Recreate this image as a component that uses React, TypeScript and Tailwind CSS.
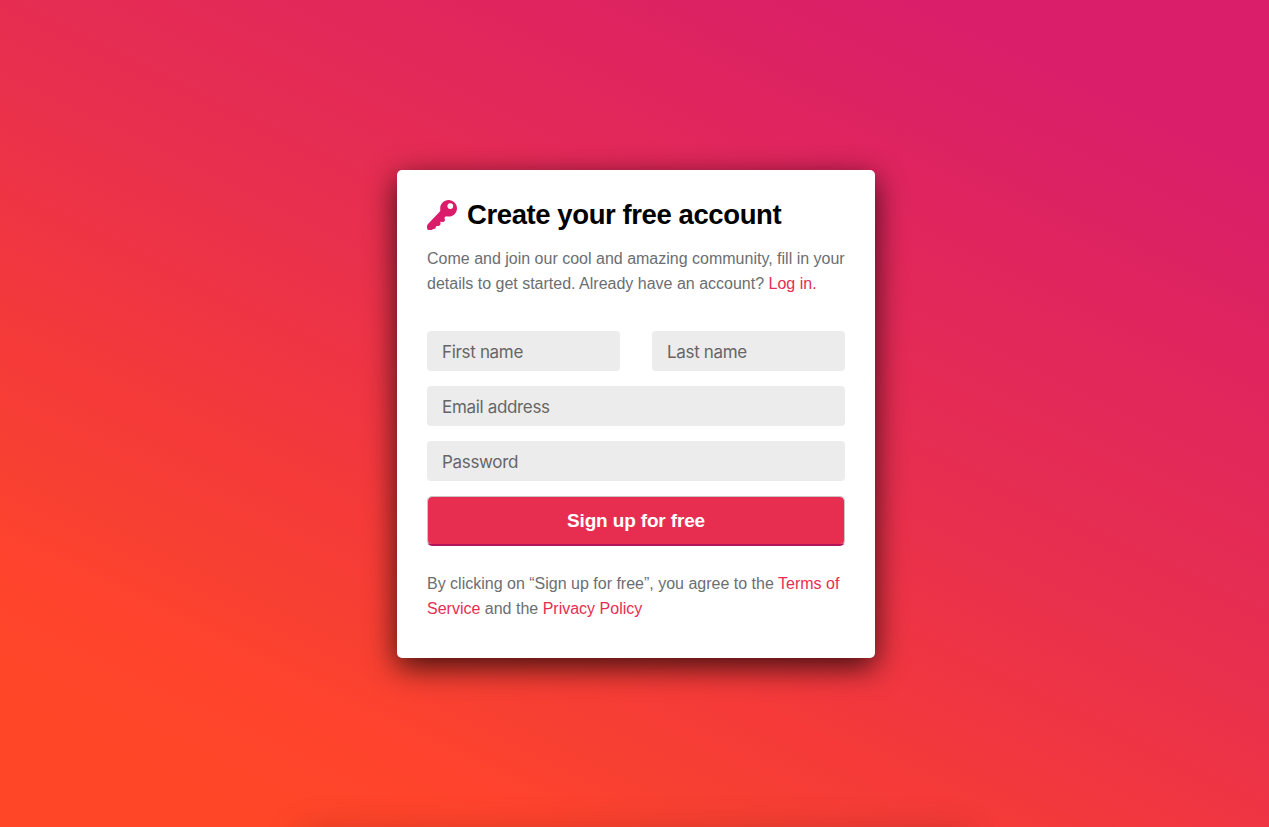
function KeyIcon({ className }: { className?: string }) {
  return (
    <svg viewBox="0 0 30 30" className={className} fill="currentColor" aria-hidden="true">
      <path
        fillRule="evenodd"
        d="M21.6 0C26.2 0 30 3.700 30 8.300s-3.800 8.300-8.400 8.300c-1 0-1.900-.1-2.800-.4-.5.5-1.200 1-1.300 1.700-.1.800.8 1.700.4 2.500-.4.800-1.300 1.600-2.100 1.700-.8.1-1.700-.6-2.300-.1-.5.5.3 1.600 0 2.300-.4.800-1.200 1.600-2 1.800-.8.100-1.700-.3-2.300.2-.6.500-.3 1.600-.9 2.200-.7.600-1.800.3-2.500.8-.6.400-1.100.700-1.800.8-.9.100-2.500.1-3.200-.4C.1 29.200-.2 27.400 0 26c.200-1 .7-1.700 1.200-2.300L12.200 12.300c.8-.8 1.200-1.400 1.100-2.200-.1-.6-.1-1.200-.1-1.800C13.200 3.700 17 0 21.600 0Zm1.700 3.200a2.900 2.900 0 1 0 0 5.800 2.900 2.900 0 0 0 0-5.800Z"
      />
    </svg>
  );
}

const field =
  "block h-10 w-full min-w-0 rounded bg-[#ececec] px-[15px] pt-[2px] font-['Inter',sans-serif] text-[17px] tracking-[-0.33px] text-[#333] outline-none placeholder:text-[#666]";
const link = "text-[#e62e52]";

export default function App() {
  return (
    <main className="relative flex h-screen w-full items-center justify-center overflow-hidden bg-[linear-gradient(26deg,#ff4727_8%,#ff432d_19%,#f84032_25%,#f53a39_34%,#e82f4e_53%,#da1e69_88%)] pl-[3px] pt-px font-['Liberation_Sans',Arial,sans-serif]">
      <section className="h-[488px] w-[478px] rounded-[5px] bg-white p-[30px] shadow-[0_9px_30px_rgba(0,0,0,0.75)]">
        <div className="flex h-[30px] items-center gap-[10px]">
          <KeyIcon className="size-[30px] shrink-0 text-[#da1c6b]" />
          <h1 className="whitespace-nowrap text-[27.5px] font-bold leading-[30px] tracking-[-0.41px] text-black">
            Create your free account
          </h1>
        </div>
        <p className="mt-4 whitespace-nowrap text-[16px] leading-[25px] text-[#6b6e72]">
          Come and join our cool and amazing community, fill in your
          <br />
          details to get started. Already have an account?{" "}
          <a href="#" className={link}>
            Log in.
          </a>
        </p>
        <form className="mt-[35px] flex flex-col gap-[15px]">
          <div className="flex gap-8">
            <input className={field} placeholder="First name" />
            <input className={field} placeholder="Last name" />
          </div>
          <input className={field} placeholder="Email address" />
          <input className={field} type="password" placeholder="Password" />
          <button
            type="button"
            className="h-[50px] rounded-[5px] border border-b-2 border-[#c9c4c6] border-b-[#b3155a] bg-[#e72e51] bg-clip-padding pt-px text-[19px] font-bold tracking-[-0.15px] text-white"
          >
            Sign up for free
          </button>
        </form>
        <p className="mt-[25px] whitespace-nowrap text-[16px] leading-[25px] text-[#6b6e72]">
          By clicking on “Sign up for free”, you agree to the{" "}
          <a href="#" className={link}>
            Terms of
            <br />
            Service
          </a>{" "}
          and the{" "}
          <a href="#" className={link}>
            Privacy Policy
          </a>
        </p>
      </section>
      <div className="absolute left-[300px] top-[calc(100%+8px)] h-10 w-[670px] shadow-[0_0_40px_rgba(0,0,0,0.2)]" />
    </main>
  );
}
